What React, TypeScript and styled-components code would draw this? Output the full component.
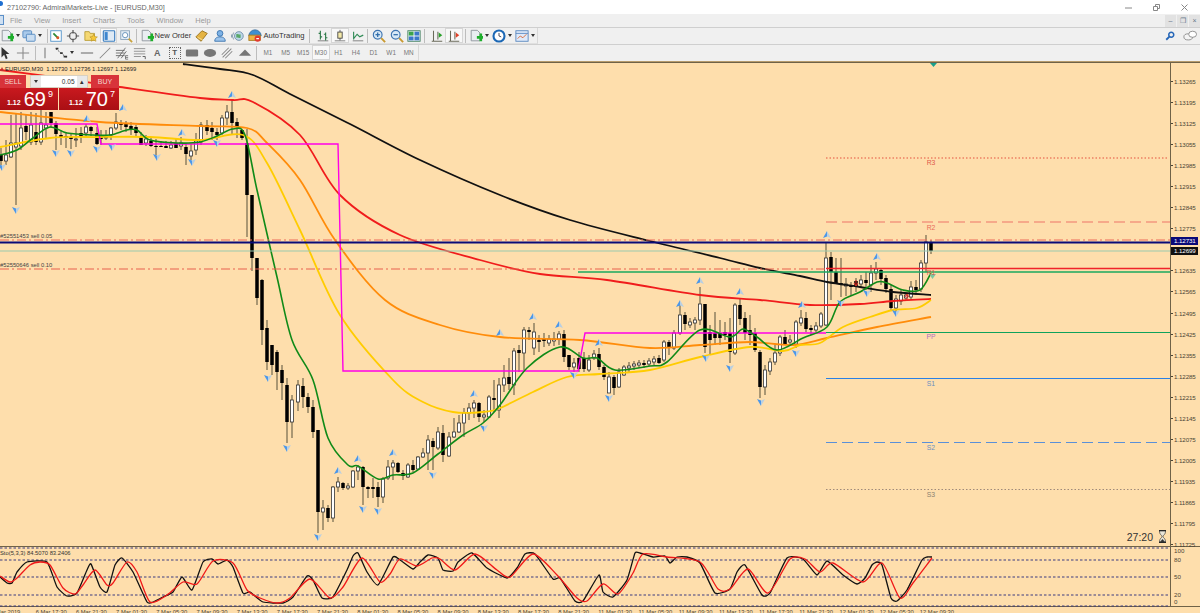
import React from 'react';
import styled, { createGlobalStyle } from 'styled-components';

const GlobalStyle = createGlobalStyle`
  html, body {
    margin: 0;
    padding: 0;
    background: #f0f0f0;
  }
  * { box-sizing: border-box; }
`;

const CHART_BG = '#fedeac';
const FONT = '"Liberation Sans", Arial, sans-serif';

const Page = styled.div`
  width: 1200px;
  height: 613px;
  overflow: hidden;
  display: flex;
  flex-direction: column;
  font-family: ${FONT};
  background: #f0f0f0;
`;

const TitleBar = styled.div`
  height: 14px;
  background: #fff;
  display: flex;
  align-items: center;
  padding-left: 7px;
  position: relative;
  font-size: 7.2px;
  color: #666;
`;

const AppDot = styled.span`
  position: absolute;
  left: -2px;
  top: 1px;
  width: 5px;
  height: 5px;
  border-radius: 50%;
  background: #1f6fd0;
`;

const WindowControls = styled.div`
  margin-left: auto;
  display: flex;
  align-items: center;
  padding-right: 12px;
  gap: 21px;
`;

const MenuBar = styled.div`
  height: 13px;
  display: flex;
  align-items: center;
  gap: 12px;
  padding-left: 10px;
  font-size: 7.5px;
  color: #9a9a9a;
  position: relative;
`;

const DocIcon = styled.span`
  position: absolute;
  left: -2px;
  top: 1px;
  width: 6px;
  height: 10px;
  border: 1px solid #5a8fc8;
  background: #cfe0f2;
`;

const MdiButtons = styled.div`
  position: absolute;
  right: 0;
  top: 1px;
  display: flex;
  gap: 1px;
`;

const MdiButton = styled.span`
  width: 11px;
  height: 12px;
  background: #e2e2e2;
  color: #68788a;
  font-size: 7px;
  line-height: 12px;
  text-align: center;
`;

const ToolbarRow = styled.div`
  height: 17px;
  display: flex;
  align-items: center;
  border-top: 1px solid #cfcfcf;
  background: #f0f0f0;
`;

const ToolGroup = styled.div<{ $width: number }>`
  width: ${p => p.$width}px;
  height: 16px;
  display: flex;
  align-items: center;
  border-right: 1px solid #d8d8d8;
  border-bottom: 1px solid #e0e0e0;
`;

const Tool = styled.div<{ $w?: number; $active?: boolean; $ml?: number }>`
  flex: none;
  width: ${p => p.$w ?? 17.6}px;
  margin-left: ${p => p.$ml ?? 0}px;
  height: 15px;
  display: flex;
  align-items: center;
  justify-content: center;
  gap: 1px;
  font-size: 7.6px;
  color: #333;
  white-space: nowrap;
  background: ${p => (p.$active ? '#f8f8f8' : 'transparent')};
  box-shadow: ${p => (p.$active ? 'inset 0 0 0 1px #d6d6d6' : 'none')};
`;

const Sep = styled.span<{ $ml?: number; $mr?: number }>`
  flex: none;
  width: 1px;
  height: 14px;
  background: #bdbdbd;
  margin-left: ${p => p.$ml ?? 0}px;
  margin-right: ${p => p.$mr ?? 0}px;
`;

const Caret = styled.span`
  flex: none;
  width: 0;
  height: 0;
  margin: 0 1px;
  border-left: 2.5px solid transparent;
  border-right: 2.5px solid transparent;
  border-top: 3px solid #333;
`;

const Period = styled(Tool)`
  font-size: 6.4px;
  color: #777;
`;

const RightTools = styled.div`
  margin-left: auto;
  display: flex;
  align-items: center;
  gap: 8px;
  padding-right: 3px;
`;

const Workspace = styled.div`
  flex: 1;
  display: flex;
  flex-direction: column;
  background: ${CHART_BG};
  border-top: 1px solid #b79b6c;
  min-height: 0;
`;

const ChartRow = styled.div`
  height: 484px;
  display: flex;
  border-top: 1px solid #6f6248;
`;

const ChartPane = styled.div`
  position: relative;
  flex: none;
  width: 1171px;
  border-right: 1px solid #6f6248;
  overflow: hidden;
`;

const ChartSvg = styled.svg`
  display: block;
`;

const PriceAxis = styled.div`
  position: relative;
  flex: 1;
  padding-top: 8px;
  font-size: 6.2px;
  letter-spacing: -0.1px;
  color: #4a4536;
`;

const PriceTick = styled.div`
  height: 21.05px;
  display: flex;
  align-items: center;
  gap: 1px;
  &::before {
    content: '';
    width: 2px;
    height: 1px;
    background: #4a4536;
  }
`;

const PriceTag = styled.div<{ $bg: string; $y: number }>`
  position: absolute;
  left: 0;
  top: ${p => p.$y}px;
  width: 27px;
  height: 8px;
  background: ${p => p.$bg};
  color: #fff;
  font-size: 6.2px;
  line-height: 8px;
  padding-left: 3px;
`;

const Legend = styled.div`
  position: absolute;
  left: 5px;
  top: 3px;
  font-size: 5.9px;
  color: #222;
  white-space: nowrap;
  &::before {
    content: '';
    position: absolute;
    left: -5px;
    top: 1px;
    border-left: 2px solid transparent;
    border-right: 2px solid transparent;
    border-bottom: 4px solid #c03030;
  }
`;

const TradePanel = styled.div`
  position: absolute;
  left: 0;
  top: 12px;
  width: 119px;
  color: #fff;
`;

const TradeTop = styled.div`
  display: flex;
  align-items: stretch;
  height: 13px;
  justify-content: space-between;
`;

const SideButton = styled.div<{ $w: number }>`
  width: ${p => p.$w}px;
  background: #d8333a;
  color: #f3d6d0;
  font-size: 7px;
  line-height: 13px;
  text-align: center;
`;

const Stepper = styled.div`
  width: 58px;
  display: flex;
  background: #fff;
  border: 1px solid #d8d0c0;
  font-size: 6.5px;
  color: #333;
  line-height: 11px;
`;

const StepBtn = styled.span`
  width: 10px;
  background: #e8e8e8;
  display: flex;
  align-items: center;
  justify-content: center;
`;

const LotInput = styled.span`
  flex: 1;
  text-align: right;
  padding-right: 2px;
`;

const PriceRow = styled.div`
  display: flex;
  gap: 1px;
`;

const PriceBox = styled.div<{ $w: number; $pad: number }>`
  width: ${p => p.$w}px;
  height: 22px;
  padding-left: ${p => p.$pad}px;
  background: linear-gradient(#c9191f, #a90f14);
  display: flex;
  align-items: flex-start;
`;

const Small = styled.span`
  font-size: 7px;
  font-weight: 700;
  margin-top: 11px;
  margin-right: 3px;
`;

const Big = styled.span`
  font-size: 20px;
  line-height: 22px;
`;

const Sup = styled.span`
  font-size: 9px;
  margin-left: 2px;
  margin-top: 1px;
`;

const Countdown = styled.div`
  position: absolute;
  right: 3px;
  bottom: 3px;
  display: flex;
  align-items: center;
  gap: 5px;
  font-size: 10.5px;
  color: #333;
`;

const StochRow = styled.div`
  height: 60px;
  display: flex;
  border-top: 1px solid #6f6248;
`;

const StochPane = styled.div`
  position: relative;
  flex: none;
  width: 1171px;
  border-right: 1px solid #6f6248;
`;

const StochLegend = styled.div`
  position: absolute;
  left: 0;
  top: 3px;
  font-size: 5.8px;
  color: #333;
  white-space: nowrap;
`;

const StochAxis = styled.div`
  position: relative;
  flex: 1;
  font-size: 6.2px;
  line-height: 7px;
  color: #4a4536;
`;

const StochTick = styled.span<{ $y: number }>`
  position: absolute;
  left: 3px;
  top: ${p => p.$y}px;
`;

const TimeAxis = styled.div`
  height: 7px;
  display: flex;
  padding-top: 2px;
  font-size: 5.8px;
  line-height: 7px;
  color: #4a4536;
  overflow: hidden;
  border-top: 1px solid #6f6248;
`;

const TimeLabel = styled.span<{ $first?: boolean }>`
  flex: none;
  width: ${p => (p.$first ? 44.7 : 40.2)}px;
  margin-left: ${p => (p.$first ? -9 : 0)}px;
  white-space: nowrap;
`;

/* toolbar icons */
const Ico = ({ children, size = 14 }: { children: React.ReactNode; size?: number }) => (
  <svg width={size} height={size} viewBox="0 0 16 16" style={{ flex: 'none' }}>{children}</svg>
);

const GreenPlus = () => <path d="M9 8h3V5h3v3h1v3h-1v3h-3v-3H9z" fill="#1eae2c" />;
const Page16 = () => <path d="M2.5 1.5h7l3 3v9h-10z" fill="#e9eef2" stroke="#8a9199" />;

const NewChartIcon = () => <Ico><Page16 /><GreenPlus /></Ico>;
const ProfilesIcon = () => (
  <Ico>
    <rect x="1" y="2" width="10" height="8" rx="1" fill="#a9c9ea" stroke="#4f86bf" />
    <rect x="5" y="6" width="10" height="8" rx="1" fill="#c9ddf1" stroke="#4f86bf" />
  </Ico>
);
const WatchIcon = () => (
  <Ico>
    <rect x="2" y="2" width="12" height="12" fill="#fff" stroke="#4d90c8" />
    <path d="M5 5l6 6" stroke="#2c8a3a" strokeWidth="2" />
    <circle cx="10" cy="10" r="1.7" fill="#e0562a" />
  </Ico>
);
const NavIcon = () => (
  <Ico>
    <circle cx="8" cy="8" r="4" fill="none" stroke="#666" strokeWidth="1.4" />
    <path d="M8 1v4M8 11v4M1 8h4M11 8h4" stroke="#555" strokeWidth="1.4" />
  </Ico>
);
const FolderStarIcon = () => (
  <Ico>
    <path d="M1 3h5l1 2h5v8H1z" fill="#f5d873" stroke="#b89b35" />
    <path d="M11 6l1.3 2.7 3 .4-2.2 2 .6 3-2.7-1.5L8.3 14l.6-3-2.2-2 3-.4z" fill="#f7c93a" stroke="#b08a20" strokeWidth=".6" />
  </Ico>
);
const TerminalIcon = () => (
  <Ico>
    <rect x="1.5" y="2" width="13" height="12" rx="1" fill="#dfeaf5" stroke="#3d7fc0" strokeWidth="1.3" />
    <rect x="3" y="3.5" width="3.5" height="9" fill="#3d86cf" />
  </Ico>
);
const TesterIcon = () => (
  <Ico>
    <rect x="2" y="2" width="10" height="10" fill="#e4edf5" stroke="#8aa2b8" />
    <circle cx="7" cy="7" r="3" fill="#fff" stroke="#5a8ab5" />
    <path d="M11 11l4 4" stroke="#c9a23c" strokeWidth="2" />
  </Ico>
);
const TagIcon = () => (
  <Ico>
    <path d="M1 9l7-7 6 3-7 9z" fill="#e4b342" stroke="#96701a" />
    <path d="M3 9.5l6 3" stroke="#f6df9a" />
  </Ico>
);
const PeopleIcon = () => (
  <Ico>
    <circle cx="8" cy="5" r="3.3" fill="#7db2e6" stroke="#3972ad" />
    <path d="M2 14c0-4 3-5 6-5s6 1 6 5z" fill="#9cc4ec" stroke="#3972ad" />
  </Ico>
);
const GlobeIcon = () => (
  <Ico>
    <circle cx="9" cy="8" r="5" fill="#bcd6e8" stroke="#6f8ea8" />
    <path d="M6 6c2-1 3 1 5 0v4c-2 1-3-1-5 0z" fill="#5aa86a" />
    <path d="M3 4a7 7 0 0 0 0 8M1 6a4 4 0 0 0 0 4" fill="none" stroke="#7f97aa" />
  </Ico>
);
const AutoTradingIcon = () => (
  <Ico>
    <path d="M1 8a7 7 0 0 1 14 0z" fill="#3f8fd0" stroke="#2a659b" />
    <rect x="1" y="7" width="13" height="6" fill="#f0b340" stroke="#a97c20" />
    <circle cx="11" cy="11" r="3.5" fill="#e23b2e" />
    <rect x="9.5" y="10.3" width="3" height="1.4" fill="#fff" />
  </Ico>
);
const BarsIcon = ({ mode }: { mode: 'bar' | 'candle' | 'line' }) => (
  <Ico>
    <path d="M2 13.5h12" stroke="#777" />
    {mode === 'line' ? (
      <path d="M3 12V3M3 11l4-5 3 3 4-2" fill="none" stroke="#2f8a55" strokeWidth="1.3" />
    ) : mode === 'bar' ? (
      <path d="M5 2v10M3 5h2M5 9h2M11 4v9M9 6h2M11 10h2" fill="none" stroke="#2f7a4a" strokeWidth="1.3" />
    ) : (
      <>
        <path d="M8 1v12" stroke="#555" />
        <rect x="5.5" y="3.5" width="5" height="7" fill="#f4e9a8" stroke="#444" />
      </>
    )}
  </Ico>
);
const ZoomIcon = ({ plus }: { plus?: boolean }) => (
  <Ico>
    <circle cx="6.5" cy="6.5" r="5" fill="#d7e8f6" stroke="#3d74b0" strokeWidth="1.3" />
    <path d="M4 6.5h5" stroke="#2d6aa8" strokeWidth="1.4" />
    {plus && <path d="M6.5 4v5" stroke="#2d6aa8" strokeWidth="1.4" />}
    <path d="M10.5 10.5L15 15" stroke="#c99a30" strokeWidth="2.2" />
  </Ico>
);
const TilesIcon = () => (
  <Ico>
    <rect x="1" y="2" width="14" height="12" fill="#fff" stroke="#3a7a5a" />
    <rect x="2" y="3" width="5.5" height="4.5" fill="#3ba34c" />
    <rect x="8.5" y="3" width="5.5" height="4.5" fill="#3b78c9" />
    <rect x="2" y="8.5" width="5.5" height="4.5" fill="#3b78c9" />
    <rect x="8.5" y="8.5" width="5.5" height="4.5" fill="#3b78c9" />
  </Ico>
);
const ScrollIcon = ({ color }: { color: string }) => (
  <Ico>
    <path d="M2 14h12M4 2v12M9 3v9" stroke="#6a6a5a" strokeWidth="1.2" />
    <path d="M10 4l4 3-4 3z" fill={color} />
  </Ico>
);
const ClockIcon = () => (
  <Ico>
    <circle cx="8" cy="8" r="6.3" fill="#fff" stroke="#1c68b5" strokeWidth="2.4" />
    <path d="M8 4.5V8l2.5 1" fill="none" stroke="#334" />
  </Ico>
);
const TemplateIcon = () => (
  <Ico>
    <rect x="1" y="2" width="14" height="12" fill="#dfeafa" stroke="#5584bd" />
    <path d="M1 5h14" stroke="#5584bd" />
    <path d="M3 11l3-3 3 2 4-4" fill="none" stroke="#d8622e" />
  </Ico>
);
const CursorIcon = () => (
  <Ico><path d="M4 1l9 8H9l2 5-2 1-2-5-3 3z" fill="#333" /></Ico>
);
const CrossIcon = () => (
  <Ico><path d="M8 1v14M1 8h14" stroke="#888" strokeWidth="1.2" /></Ico>
);
const VLineIcon = () => <Ico><path d="M8 2v12" stroke="#777" strokeWidth="1.2" /></Ico>;
const LineToolsIcon = () => (
  <Ico>
    <path d="M2 3l12 10" stroke="#444" strokeWidth="1" strokeDasharray="2 1.5" />
    <path d="M2 3h3M7 8h3M11 12h4" stroke="#333" strokeWidth="2" />
  </Ico>
);
const HLineIcon = () => <Ico><path d="M1 8h14" stroke="#777" strokeWidth="1.3" /></Ico>;
const TrendIcon = () => <Ico><path d="M2 14L14 2" stroke="#888" strokeWidth="1.2" /></Ico>;
const FiboIcon = () => (
  <Ico>
    <path d="M1 5h10M1 8h10M1 11h10M3 14L12 2M7 14l6-8" stroke="#666" strokeWidth="1" />
    <path d="M12 11h3M12 13h3M12 15h3M12 11v4" stroke="#555" strokeWidth=".8" />
  </Ico>
);
const LevelsIcon = () => (
  <Ico>
    <path d="M1 3h13M1 6h13M1 9h13M1 12h8" stroke="#8a8a8a" />
    <path d="M11 12h3v3" fill="none" stroke="#555" />
  </Ico>
);
const GlyphTool = styled.span`
  font-size: 9px;
  font-weight: 700;
  color: #666;
`;
const TextBox = styled.span`
  width: 12px;
  height: 12px;
  border: 1px dotted #666;
  font-size: 8px;
  font-weight: 700;
  line-height: 10px;
  text-align: center;
  color: #555;
`;
const RectIcon = () => <Ico><rect x="1" y="4" width="14" height="8" rx="1.5" fill="#777" /></Ico>;
const EllipseIcon = () => <Ico><ellipse cx="8" cy="8" rx="7" ry="4.5" fill="#777" /></Ico>;
const ChannelIcon = () => <Ico><path d="M2 10L10 2M3 13L13 3M6 14l8-8" stroke="#888" strokeWidth="1.2" /></Ico>;
const TriangleIcon = () => <Ico><path d="M8 4l7 7H1z" fill="#777" /></Ico>;
const SearchIcon = () => (
  <Ico size={10}>
    <circle cx="10" cy="6" r="4" fill="none" stroke="#2566b8" strokeWidth="2.4" />
    <path d="M7 9l-5 5" stroke="#2566b8" strokeWidth="3" />
  </Ico>
);
const ChatIcon = () => (
  <Ico>
    <ellipse cx="6" cy="9" rx="5" ry="3.5" fill="#f4f4f4" stroke="#888" />
    <ellipse cx="11" cy="6" rx="4.5" ry="3.5" fill="#fff" stroke="#888" />
  </Ico>
);

/* chart data, in page coordinates */
type Pt = [number, number];

// catmull-rom through the points; a higher k means tighter corners
const smooth = (p: Pt[], k = 6) => {
  let d = `M${p[0][0]} ${p[0][1]}`;
  for (let i = 0; i < p.length - 1; i++) {
    const a = p[i - 1] ?? p[i];
    const b = p[i];
    const c = p[i + 1];
    const e = p[i + 2] ?? c;
    d += `C${(b[0] + (c[0] - a[0]) / k).toFixed(1)} ${(b[1] + (c[1] - a[1]) / k).toFixed(1)} ${(c[0] - (e[0] - b[0]) / k).toFixed(1)} ${(c[1] - (e[1] - b[1]) / k).toFixed(1)} ${c[0]} ${c[1]}`;
  }
  return d;
};

const BLACK_MA: Pt[] = [[183, 64], [220, 69], [253, 75], [290, 94], [350, 124], [420, 160], [500, 195], [570, 220], [650, 241], [720, 258], [760, 268], [800, 276], [827, 282], [860, 287], [893, 292], [931, 295]];
const RED_MA: Pt[] = [[0, 70], [60, 78], [120, 87], [200, 98], [233, 100], [253, 102], [300, 135], [340, 195], [400, 235], [480, 260], [540, 274], [607, 280], [700, 295], [760, 300], [810, 305], [860, 304], [893, 301], [931, 299]];
const ORANGE_MA: Pt[] = [[0, 112], [100, 122], [200, 126], [247, 128], [267, 143], [300, 180], [335, 240], [385, 300], [440, 325], [500, 337], [580, 340], [650, 348], [700, 345], [750, 342], [793, 345], [827, 338], [877, 327], [931, 317]];
const YELLOW_MA: Pt[] = [[0, 147], [50, 138], [100, 137], [150, 137], [200, 140], [243, 135], [267, 163], [300, 230], [340, 315], [393, 380], [423, 402], [453, 412], [483, 412], [500, 408], [533, 392], [567, 377], [600, 374], [650, 370], [700, 357], [750, 347], [783, 351], [800, 345], [820, 343], [843, 327], [870, 317], [893, 310], [917, 308], [931, 300]];
const GREEN_MA: Pt[] = [[0, 155], [17, 150], [33, 138], [50, 127], [67, 133], [93, 135], [110, 135], [127, 130], [137, 130], [150, 140], [177, 143], [200, 142], [217, 136], [233, 129], [245, 135], [257, 190], [277, 277], [292, 340], [313, 380], [328, 438], [348, 465], [358, 466], [378, 479], [393, 475], [413, 473], [438, 454], [463, 435], [483, 423], [500, 405], [527, 368], [560, 347], [583, 358], [597, 358], [615, 370], [650, 366], [667, 362], [700, 330], [730, 337], [743, 329], [757, 337], [777, 350], [803, 338], [827, 327], [840, 302], [860, 292], [877, 282], [887, 283], [903, 290], [920, 290], [931, 273]];

// x, high, low, body top, body bottom, black
const CANDLES: number[][] = [
  [1,148,165,155,161,1],[6,140,165,155,161,0],[11,115,158,143,157,0],[16,114,205,143,147,0],[21,112,150,128,146,0],
  [26,115,140,126,132,1],[31,112,145,125,142,0],[36,113,145,132,142,1],[41,110,145,123,142,0],[46,112,138,125,128,0],
  [51,112,128,112,123,1],[56,121,150,123,134,1],[61,130,145,135,138,1],[66,132,148,136,138,1],[71,133,149,137,139,1],
  [76,128,147,139,140,0],[81,127,143,133,137,1],[86,124,137,127,133,0],[91,126,136,127,131,1],[97,127,145,133,144,1],
  [101,130,145,137,139,1],[106,130,140,137,138,0],[111,127,140,128,135,0],[116,113,130,122,128,0],[121,120,130,123,125,1],
  [126,121,132,124,127,1],[131,122,135,126,129,1],[136,125,137,127,133,1],[141,132,145,136,145,1],[146,135,146,139,143,0],
  [151,137,147,141,146,1],[156,139,155,146,147,1],[161,141,147,146,147,1],[166,141,148,146,148,1],[171,141,149,145,148,0],
  [176,138,148,143,148,1],[181,137,150,143,146,0],[186,143,165,147,154,1],[191,144,160,151,156,0],[196,133,155,141,150,0],
  [201,122,145,125,142,0],[207,120,135,125,131,1],[212,122,140,128,132,1],[217,128,140,132,135,1],[222,115,135,118,133,0],
  [227,105,125,112,118,0],[232,100,135,112,123,1],[237,118,138,122,127,1],[242,130,140,130,138,1],[247,129,237,143,195,1],
  [252,195,271,195,258,1],[257,258,305,258,298,1],[262,279,345,280,330,1],[267,320,370,328,362,1],[272,345,375,345,365,1],
  [277,350,390,352,372,1],[282,365,400,370,383,1],[287,378,443,385,422,1],[292,395,438,400,422,0],[298,380,411,385,402,0],
  [303,378,408,386,397,1],[308,393,413,397,407,1],[313,400,438,407,432,1],[318,430,533,430,512,1],[323,500,530,508,512,0],
  [328,505,522,508,518,1],[333,486,522,487,518,0],[338,477,492,482,487,0],[343,482,490,483,488,1],[348,483,490,486,488,0],
  [353,470,488,471,487,0],[358,465,480,467,471,0],[363,466,505,467,487,1],[368,486,498,487,489,1],[373,478,498,487,489,1],
  [378,482,507,487,497,1],[383,477,503,479,497,0],[388,460,480,467,478,0],[393,460,480,463,467,0],[398,462,473,463,472,1],
  [403,470,480,473,476,1],[408,463,478,465,477,0],[413,460,472,465,470,1],[418,456,470,457,469,0],[423,448,458,453,457,0],
  [428,435,470,440,453,0],[433,438,470,441,447,1],[438,427,450,432,448,0],[443,425,462,433,455,1],[449,432,457,437,456,0],
  [454,418,438,432,437,0],[459,415,433,423,432,0],[464,408,437,413,423,0],[469,403,420,408,413,0],[474,400,418,403,408,0],
  [479,402,422,403,417,1],[484,410,422,415,417,0],[489,395,418,397,417,0],[494,380,412,398,400,1],[499,378,418,385,410,0],
  [504,365,392,378,385,0],[509,358,390,377,384,1],[514,348,395,351,385,0],[519,345,372,350,353,1],[524,327,370,330,353,0],
  [529,327,340,330,332,1],[534,323,355,332,348,0],[539,335,352,340,342,1],[544,333,347,339,341,1],[549,335,346,339,343,0],
  [554,332,346,339,341,0],[559,331,345,334,339,0],[564,330,362,334,357,1],[569,355,370,355,367,1],[574,358,372,363,367,0],
  [579,352,372,358,369,1],[584,352,372,358,369,1],[589,355,372,360,370,0],[594,350,360,354,358,0],[599,348,370,354,367,1],
  [604,365,380,367,377,1],[609,372,393,377,393,0],[614,375,395,377,388,1],[619,368,388,372,387,0],[624,365,376,367,375,0],
  [629,362,372,366,368,0],[634,361,370,364,366,0],[639,360,368,363,365,0],[644,360,368,363,365,1],[649,358,366,361,364,0],
  [654,356,365,359,362,0],[659,355,364,358,363,1],[664,340,362,342,360,0],[669,340,355,342,348,1],[674,330,350,333,348,0],
  [680,303,335,315,333,0],[685,312,330,315,324,1],[690,318,328,322,325,0],[695,317,330,320,323,0],[700,287,325,304,320,0],
  [705,304,353,304,347,1],[710,325,355,332,340,1],[715,312,345,333,338,1],[720,320,345,333,338,1],[725,322,340,332,335,1],
  [730,318,363,333,352,1],[735,303,355,305,353,0],[740,298,325,305,319,1],[745,312,340,318,333,1],[750,315,345,330,335,1],
  [755,328,352,333,350,1],[760,350,398,352,387,1],[765,365,395,370,387,0],[770,358,375,362,371,0],[775,345,365,353,362,0],
  [780,335,356,337,353,0],[785,330,345,337,344,1],[790,335,346,340,342,0],[796,320,348,322,344,0],[801,310,326,318,323,0],
  [806,312,332,318,329,1],[811,325,335,328,330,1],[816,322,332,326,330,0],[821,312,328,314,326,0],[826,242,326,258,325,0],
  [831,252,300,257,272,1],[836,258,283,272,283,1],[841,258,297,283,285,1],[846,278,296,284,286,0],[851,282,296,285,287,1],
  [856,278,292,281,287,1],[861,275,288,280,284,0],[866,272,290,280,283,1],[871,265,292,273,285,0],[876,262,280,269,273,0],
  [881,268,285,270,279,1],[886,275,293,278,289,1],[891,285,310,289,308,1],[896,295,312,299,308,0],[901,290,305,295,301,0],
  [906,293,301,295,298,0],[911,281,300,287,297,0],[916,280,295,287,290,1],[921,260,292,263,289,0],[926,235,272,242,263,0],
  [931,240,254,242,251,1],
];

const UP_ARROWS: Pt[] = [[87,119],[123,108],[182,133],[232,95],[338,471],[358,459],[393,453],[474,394],[500,333],[533,317],[559,325],[599,343],[680,304],[700,281],[740,292],[802,305],[827,235],[877,257]];
const DOWN_ARROWS: Pt[] = [[2,167],[16,210],[56,153],[71,153],[97,149],[112,147],[157,157],[192,162],[217,143],[268,378],[287,448],[318,537],[363,509],[378,511],[433,475],[484,428],[574,375],[609,398],[706,358],[730,368],[761,402],[796,353],[841,303],[867,293],[896,313]];

const STOCH_BLACK: Pt[] = [[0,577],[7,583],[12,583],[17,572],[27,562],[47,562],[57,587],[67,596],[77,593],[87,570],[91,564],[100,587],[107,592],[115,565],[122,558],[133,572],[147,602],[153,602],[163,597],[173,592],[182,577],[192,590],[203,562],[212,559],[218,564],[227,560],[233,567],[243,593],[250,592],[263,602],[283,603],[293,597],[307,576],[313,580],[322,598],[333,597],[347,570],[353,556],[358,553],[367,572],[378,585],[393,557],[400,560],[413,569],[420,562],[428,555],[438,558],[443,570],[453,571],[458,562],[472,553],[487,568],[507,578],[517,568],[525,554],[535,554],[553,579],[560,578],[575,601],[583,601],[599,575],[603,592],[613,597],[627,580],[635,553],[640,553],[653,557],[665,556],[670,563],[677,557],[687,557],[700,563],[715,593],[730,589],[737,572],[745,565],[762,595],[770,593],[787,558],[803,559],[817,575],[827,561],[843,575],[857,584],[865,578],[872,565],[877,562],[882,565],[891,598],[897,601],[907,590],[922,560],[927,557],[932,557]];
const STOCH_RED: Pt[] = [[0,576],[10,582],[17,578],[30,565],[40,562],[50,565],[63,588],[75,594],[83,585],[95,570],[107,585],[113,583],[127,562],[137,572],[150,602],[167,595],[183,582],[197,584],[213,561],[233,563],[247,590],[260,598],[277,603],[290,598],[310,579],[330,598],[343,587],[362,558],[380,582],[390,574],[400,559],[417,566],[432,558],[440,559],[455,570],[475,554],[497,570],[510,577],[533,554],[557,575],[577,598],[587,601],[603,584],[618,594],[633,573],[643,554],[667,557],[700,562],[718,589],[730,589],[748,569],[768,593],[790,559],[805,559],[820,572],[833,563],[863,582],[882,563],[900,598],[913,583],[932,558]];

const PRICES = ['1.13265','1.13195','1.13125','1.13055','1.12985','1.12915','1.12845','1.12775','','1.12635','1.12565','1.12495','1.12425','1.12355','1.12285','1.12215','1.12145','1.12075','1.12005','1.11935','1.11865','1.11795','1.11725'];
const TIMES = ['6 Mar 2019','6 Mar 17:30','6 Mar 21:30','7 Mar 01:30','7 Mar 05:30','7 Mar 09:30','7 Mar 13:30','7 Mar 17:30','7 Mar 21:30','8 Mar 01:30','8 Mar 05:30','8 Mar 09:30','8 Mar 13:30','8 Mar 17:30','8 Mar 21:30','11 Mar 01:30','11 Mar 05:30','11 Mar 09:30','11 Mar 13:30','11 Mar 17:30','11 Mar 21:30','12 Mar 01:30','12 Mar 05:30','12 Mar 09:30'];

const Candle = ({ c }: { c: number[] }) => {
  const [x, h, l, t, b, black] = c;
  return (
    <g>
      <path d={`M${x} ${h}V${l}`} stroke="#57503a" strokeWidth="1" />
      {black ? (
        <rect x={x - 1.75} y={t} width={3.5} height={Math.max(b - t, 1)} fill="#000" />
      ) : (
        <rect x={x - 1.5} y={t} width={3} height={Math.max(b - t, 1)} fill="#fff" stroke="#333" strokeWidth=".8" />
      )}
    </g>
  );
};

const Fractal = ({ p, up }: { p: Pt; up?: boolean }) => (
  <g transform={`translate(${p[0]} ${p[1]})${up ? '' : ' rotate(180)'}`}>
    <path d="M0 -4L-4 3L0 1.5Z" fill={up ? '#4b97ea' : '#b9cfe2'} />
    <path d="M0 -4L4 3L0 1.5Z" fill={up ? '#b9cfe2' : '#4b97ea'} />
  </g>
);

const LevelLabel = ({ y, fill, children }: { y: number; fill: string; children: string }) => (
  <text x="931" y={y} fill={fill} fontSize="6.8" textAnchor="middle" fontFamily={FONT}>{children}</text>
);

const OrderLabel = ({ y, children }: { y: number; children: string }) => (
  <text x="0" y={y} fill="#444" fontSize="5.8" fontFamily={FONT}>{children}</text>
);

const PriceChart = () => (
  <ChartSvg width="1170" height="484" viewBox="0 63 1170 484">
    {CANDLES.map(c => <Candle key={c[0]} c={c} />)}

    <path d={smooth(BLACK_MA)} fill="none" stroke="#111" strokeWidth="1.8" />
    <path d={smooth(RED_MA)} fill="none" stroke="#f01c1c" strokeWidth="1.8" />
    <path d={smooth(ORANGE_MA)} fill="none" stroke="#ff8c0a" strokeWidth="1.8" />
    <path d={smooth(YELLOW_MA)} fill="none" stroke="#ffcc00" strokeWidth="1.8" />
    <path d="M0 124H97L101 144H338L343 371H578L585 333H826" fill="none" stroke="#ff00e6" strokeWidth="1.4" />
    <path d={smooth(GREEN_MA)} fill="none" stroke="#108a18" strokeWidth="1.6" />

    {UP_ARROWS.map(p => <Fractal key={p[0]} p={p} up />)}
    {DOWN_ARROWS.map(p => <Fractal key={p[0]} p={p} />)}
    <path d="M930 63h7l-3.5 4z" fill="#1aa08c" />
    <path d="M907 301v-6M905 297l2-3 2 3" fill="none" stroke="#e8332a" />
    <path d="M856 280v5M854 283l2 3 2-3" fill="none" stroke="#e8332a" />

    <path d="M0 240H1170" stroke="#ec6a5a" strokeDasharray="9 3 2 3" />
    <path d="M0 242.5H1170" stroke="#0a0a78" strokeWidth="1.8" />
    <path d="M0 251H1170" stroke="#9ac9ae" strokeWidth="1.2" />
    <path d="M0 269H826" stroke="#e8604e" strokeDasharray="9 3 2 3" />
    <path d="M826 268.5H1170" stroke="#f0222a" strokeWidth="1.5" />
    <path d="M578 272H1170" stroke="#1aa85e" strokeWidth="1.4" />
    <path d="M826 158H1168" stroke="#e4503f" strokeDasharray="1.5 2" />
    <path d="M826 222H1170" stroke="#ee7568" strokeWidth="1.2" strokeDasharray="11 5" />
    <path d="M826 332.5H1170" stroke="#0ea25c" strokeWidth="1.2" />
    <path d="M826 378.5H1170" stroke="#2a80e4" strokeWidth="1.2" />
    <path d="M826 442.5H1170" stroke="#5a90d8" strokeWidth="1.2" strokeDasharray="11 5" />
    <path d="M826 489.5H1170" stroke="#a08a7a" strokeDasharray="1.5 2" />
    <path d="M929 274h7l-3.5 5z" fill="#7cc8a0" />

    <OrderLabel y={238}>#52551453 sell 0.05</OrderLabel>
    <OrderLabel y={267}>#52550646 sell 0.10</OrderLabel>
    <LevelLabel y={164.5} fill="#e05a4a">R3</LevelLabel>
    <LevelLabel y={229.5} fill="#e86a5a">R2</LevelLabel>
    <LevelLabel y={275} fill="#d8604e">R1</LevelLabel>
    <LevelLabel y={338.5} fill="#b070c0">PP</LevelLabel>
    <LevelLabel y={385.5} fill="#6a8ec0">S1</LevelLabel>
    <LevelLabel y={449.5} fill="#6a8ec0">S2</LevelLabel>
    <LevelLabel y={496.5} fill="#8a8070">S3</LevelLabel>
  </ChartSvg>
);

const StochChart = () => (
  <ChartSvg width="1170" height="60" viewBox="0 547 1170 60">
    {[548, 560, 577, 595, 606].map(y => (
      <path key={y} d={`M0 ${y}H1170`} stroke="#3a3a80" strokeDasharray="2.5 2" />
    ))}
    <path d={smooth(STOCH_BLACK, 12)} fill="none" stroke="#111" strokeWidth="1.3" />
    <path d={smooth(STOCH_RED, 8)} fill="none" stroke="#f01818" strokeWidth="1.3" />
  </ChartSvg>
);

const Hourglass = () => (
  <svg width="9" height="13" viewBox="0 0 9 13">
    <path d="M1 .5h7M1 12.5h7" stroke="#222" strokeWidth="1.4" />
    <path d="M1.5 1C1.5 5 4 5 4 6.5S1.500 8 1.500 12h6C7.500 8 5 8 5 6.500S7.500 5 7.500 1z" fill="#e8e4d8" stroke="#333" strokeWidth=".7" />
    <path d="M2 12l2.500-3L7 12z" fill="#333" />
  </svg>
);

const App = () => (
  <Page>
    <GlobalStyle />
    <TitleBar>
      <AppDot />
      27102790: AdmiralMarkets-Live - [EURUSD,M30]
      <WindowControls>
        <svg width="7" height="7" viewBox="0 0 7 7"><path d="M0 4h7" stroke="#888" /></svg>
        <svg width="7" height="7" viewBox="0 0 7 7"><path d="M.5 2.500h4v4h-4zM2.500 2.500v-2h4v4h-2" fill="none" stroke="#888" /></svg>
        <svg width="7" height="7" viewBox="0 0 7 7"><path d="M.5.5l6 6M6.500.5l-6 6" stroke="#888" /></svg>
      </WindowControls>
    </TitleBar>

    <MenuBar>
      <DocIcon />
      <span>File</span>
      <span>View</span>
      <span>Insert</span>
      <span>Charts</span>
      <span>Tools</span>
      <span>Window</span>
      <span>Help</span>
      <MdiButtons>
        <MdiButton>–</MdiButton>
        <MdiButton>❐</MdiButton>
        <MdiButton>×</MdiButton>
      </MdiButtons>
    </MenuBar>

    <ToolbarRow>
      <ToolGroup $width={538}>
        <Tool $w={20}><NewChartIcon /><Caret /></Tool>
        <Tool $w={24}><ProfilesIcon /><Caret /></Tool>
        <Sep $ml={3} $mr={-1} />
        <Tool><WatchIcon /></Tool>
        <Tool><NavIcon /></Tool>
        <Tool><FolderStarIcon /></Tool>
        <Tool $active><TerminalIcon /></Tool>
        <Tool><TesterIcon /></Tool>
        <Sep $ml={1.5} />
        <Tool $w={56}><NewChartIcon />New Order</Tool>
        <Tool $w={18}><TagIcon /></Tool>
        <Tool $w={18}><PeopleIcon /></Tool>
        <Tool $w={18}><GlobeIcon /></Tool>
        <Tool $w={58}><AutoTradingIcon />AutoTrading</Tool>
        <Sep $ml={4} $mr={3.5} />
        <Tool $w={17.5}><BarsIcon mode="bar" /></Tool>
        <Tool $w={17.5} $active><BarsIcon mode="candle" /></Tool>
        <Tool $w={17.5}><BarsIcon mode="line" /></Tool>
        <Sep $ml={1} $mr={2} />
        <Tool $w={17.5}><ZoomIcon plus /></Tool>
        <Tool $w={17.5}><ZoomIcon /></Tool>
        <Tool $w={17.5}><TilesIcon /></Tool>
        <Sep $ml={1.5} $mr={2.5} />
        <Tool $w={17.5}><ScrollIcon color="#2aa02a" /></Tool>
        <Tool $w={17.5} $active><ScrollIcon color="#e04028" /></Tool>
        <Sep $ml={2} $mr={2} />
        <Tool $w={23}><NewChartIcon /><Caret /></Tool>
        <Tool $w={23}><ClockIcon /><Caret /></Tool>
        <Tool $w={23}><TemplateIcon /><Caret /></Tool>
      </ToolGroup>
      <RightTools>
        <SearchIcon />
        <ChatIcon />
      </RightTools>
    </ToolbarRow>

    <ToolbarRow>
      <ToolGroup $width={419}>
        <Tool $w={18} $ml={-4}><CursorIcon /></Tool>
        <Tool $w={18}><CrossIcon /></Tool>
        <Sep $ml={3} $mr={3} />
        <Tool $w={12}><VLineIcon /></Tool>
        <Tool $w={27.5}><LineToolsIcon /><Caret /></Tool>
        <Tool $w={17.5}><HLineIcon /></Tool>
        <Tool $w={17.5}><TrendIcon /></Tool>
        <Tool $w={17.5}><FiboIcon /></Tool>
        <Tool $w={17.5}><LevelsIcon /></Tool>
        <Tool $w={17.5}><GlyphTool>A</GlyphTool></Tool>
        <Tool $w={17.5}><TextBox>T</TextBox></Tool>
        <Tool $w={17.5}><RectIcon /></Tool>
        <Tool $w={17.5}><EllipseIcon /></Tool>
        <Tool $w={17.5}><ChannelIcon /></Tool>
        <Tool $w={17.5}><TriangleIcon /></Tool>
        <Sep $ml={2.5} $mr={2.2} />
        <Period>M1</Period>
        <Period>M5</Period>
        <Period>M15</Period>
        <Period $active>M30</Period>
        <Period>H1</Period>
        <Period>H4</Period>
        <Period>D1</Period>
        <Period>W1</Period>
        <Period>MN</Period>
      </ToolGroup>
    </ToolbarRow>

    <Workspace>
      <ChartRow>
        <ChartPane>
          <PriceChart />
          <Legend>EURUSD,M30&nbsp; 1.12730 1.12736 1.12697 1.12699</Legend>
          <TradePanel>
            <TradeTop>
              <SideButton $w={26}>SELL</SideButton>
              <Stepper>
                <StepBtn><Caret /></StepBtn>
                <LotInput>0.05</LotInput>
                <StepBtn>▴</StepBtn>
              </Stepper>
              <SideButton $w={28}>BUY</SideButton>
            </TradeTop>
            <PriceRow>
              <PriceBox $w={58} $pad={7}>
                <Small>1.12</Small><Big>69</Big><Sup>9</Sup>
              </PriceBox>
              <PriceBox $w={60} $pad={10}>
                <Small>1.12</Small><Big>70</Big><Sup>7</Sup>
              </PriceBox>
            </PriceRow>
          </TradePanel>
          <Countdown>27:20 <Hourglass /></Countdown>
        </ChartPane>
        <PriceAxis>
          {PRICES.map((p, i) => <PriceTick key={i}>{p}</PriceTick>)}
          <PriceTag $bg="#0a0a78" $y={174}>1.12731</PriceTag>
          <PriceTag $bg="#111" $y={184}>1.12699</PriceTag>
        </PriceAxis>
      </ChartRow>

      <StochRow>
        <StochPane>
          <StochChart />
          <StochLegend>Sto(5,3,3) 84.5070 83.2406</StochLegend>
        </StochPane>
        <StochAxis>
          <StochTick $y={0}>100</StochTick>
          <StochTick $y={8.5}>80</StochTick>
          <StochTick $y={25.5}>50</StochTick>
          <StochTick $y={43.5}>20</StochTick>
          <StochTick $y={50.5}>0</StochTick>
        </StochAxis>
      </StochRow>

      <TimeAxis>
        {TIMES.map((t, i) => <TimeLabel key={t} $first={i === 0}>{t}</TimeLabel>)}
      </TimeAxis>
    </Workspace>
  </Page>
);

export default App;
